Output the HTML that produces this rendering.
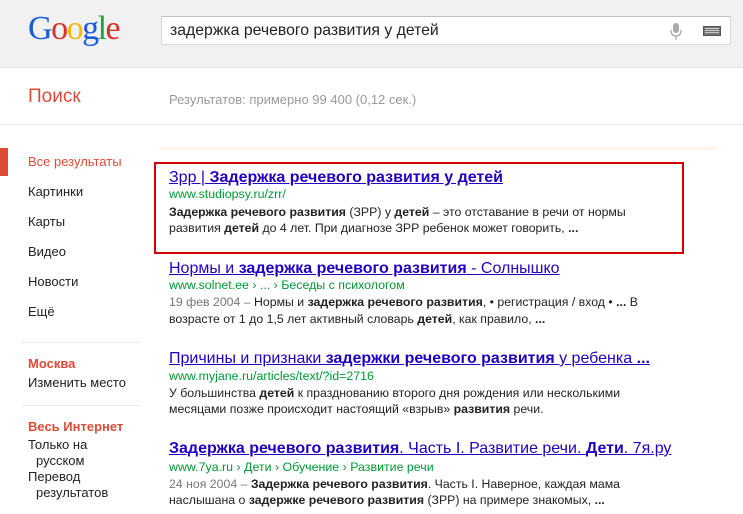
<!DOCTYPE html>
<html><head><meta charset="utf-8"><style>
*{margin:0;padding:0;box-sizing:border-box}
body{width:743px;height:514px;overflow:hidden;background:#fff;font-family:"Liberation Sans",Arial,sans-serif;position:relative;color:#222}
.a{position:absolute;white-space:nowrap}
#hdr{position:absolute;left:0;top:0;width:743px;height:68px;background:#f1f1f1;border-bottom:1px solid #e5e5e5}
#bar2{position:absolute;left:0;top:68px;width:743px;height:57px;border-bottom:1px solid #ebebeb}
.logo{font-family:"Liberation Serif",serif;font-size:34px;letter-spacing:-1.5px;left:28px;top:10px}
#sb{position:absolute;left:161px;top:16px;width:570px;height:29px;background:#fff;border:1px solid #d9d9d9;border-top-color:#c0c0c0}
.side{font-size:13px;color:#222;left:28px}
.t{font-size:16px;text-decoration:underline;left:169px;color:#2200c1}
.u{font-size:12.4px;left:169px;color:#009933}
.s{font-size:12.3px;color:#222;left:169px}
.g{color:#777}
b{font-weight:bold}
</style></head><body>
<div id="hdr"></div>
<div class="a logo"><span style="color:#1a5bd6">G</span><span style="color:#d8302a">o</span><span style="color:#f2b90f">o</span><span style="color:#1a5bd6">g</span><span style="color:#2a9b43">l</span><span style="color:#d8302a">e</span></div>
<div id="sb"></div>
<div class="a" style="left:170px;top:22px;font-size:15.8px;color:#222">задержка речевого развития у детей</div>
<svg class="a" style="left:670px;top:22px" width="12" height="18"><rect x="3" y="1" width="6" height="10" rx="3" fill="#aaa"/><path d="M1 8 Q1 14 6 14 Q11 14 11 8" fill="none" stroke="#aaa" stroke-width="1.3"/><rect x="5.4" y="14" width="1.3" height="4" fill="#aaa"/></svg>
<div class="a" style="left:703px;top:26px;width:18px;height:10px;background:#777;border:1px solid #555"></div>
<div class="a" style="left:705px;top:28px;width:14px;height:1px;background:#ccc;box-shadow:0 2px 0 #ccc,0 4px 0 #ccc"></div>
<div id="bar2"></div>
<div class="a" style="left:28px;top:86px;font-size:19px;color:#dd4b39">Поиск</div>
<div class="a" style="left:169px;top:92px;font-size:13px;color:#999">Результатов: примерно 99 400 (0,12 сек.)</div>

<div class="a" style="left:0;top:148px;width:8px;height:28px;background:#dd4b39"></div>
<div class="a side" style="top:154px;color:#dd4b39">Все результаты</div>
<div class="a side" style="top:184px">Картинки</div>
<div class="a side" style="top:214px">Карты</div>
<div class="a side" style="top:244px">Видео</div>
<div class="a side" style="top:274px">Новости</div>
<div class="a side" style="top:304px">Ещё</div>
<div class="a" style="left:22px;top:342px;width:118px;height:1px;background:#ebebeb"></div>
<div class="a side" style="top:356px;color:#dd4b39;font-weight:bold">Москва</div>
<div class="a side" style="top:375px">Изменить место</div>
<div class="a" style="left:22px;top:405px;width:118px;height:1px;background:#ebebeb"></div>
<div class="a side" style="top:419px;color:#dd4b39;font-weight:bold">Весь Интернет</div>
<div class="a side" style="top:437px">Только на</div>
<div class="a side" style="top:453px;left:36px">русском</div>
<div class="a side" style="top:469px">Перевод</div>
<div class="a side" style="top:485px;left:36px">результатов</div>

<div class="a" style="left:160px;top:147px;width:557px;height:3px;background:#fdf6e6"></div>
<div class="a" style="left:154px;top:162px;width:530px;height:92px;border:2px solid #d40000"></div>

<div class="a t" style="top:169px">Зрр | <b>Задержка речевого развития у детей</b></div>
<div class="a u" style="top:187px">www.studiopsy.ru/zrr/</div>
<div class="a s" style="top:205px"><b>Задержка речевого развития</b> (ЗРР) у <b>детей</b> – это отставание в речи от нормы</div>
<div class="a s" style="top:221px">развития <b>детей</b> до 4 лет. При диагнозе ЗРР ребенок может говорить, <b>...</b></div>

<div class="a t" style="top:260px">Нормы и <b>задержка речевого развития</b> - Солнышко</div>
<div class="a u" style="top:278px">www.solnet.ee › ... › Беседы с психологом</div>
<div class="a s" style="top:295px"><span class="g">19 фев 2004 – </span>Нормы и <b>задержка речевого развития</b>, • регистрация / вход • <b>...</b> В</div>
<div class="a s" style="top:312px">возрасте от 1 до 1,5 лет активный словарь <b>детей</b>, как правило, <b>...</b></div>

<div class="a t" style="top:350px">Причины и признаки <b>задержки речевого развития</b> у ребенка <b>...</b></div>
<div class="a u" style="top:369px">www.myjane.ru/articles/text/?id=2716</div>
<div class="a s" style="top:386px">У большинства <b>детей</b> к празднованию второго дня рождения или несколькими</div>
<div class="a s" style="top:402px">месяцами позже происходит настоящий «взрыв» <b>развития</b> речи.</div>

<div class="a t" style="top:440px"><b>Задержка речевого развития</b>. Часть I. Развитие речи. <b>Дети</b>. 7я.ру</div>
<div class="a u" style="top:460px">www.7ya.ru › Дети › Обучение › Развитие речи</div>
<div class="a s" style="top:477px"><span class="g">24 ноя 2004 – </span><b>Задержка речевого развития</b>. Часть I. Наверное, каждая мама</div>
<div class="a s" style="top:493px">наслышана о <b>задержке речевого развития</b> (ЗРР) на примере знакомых, <b>...</b></div>
</body></html>
